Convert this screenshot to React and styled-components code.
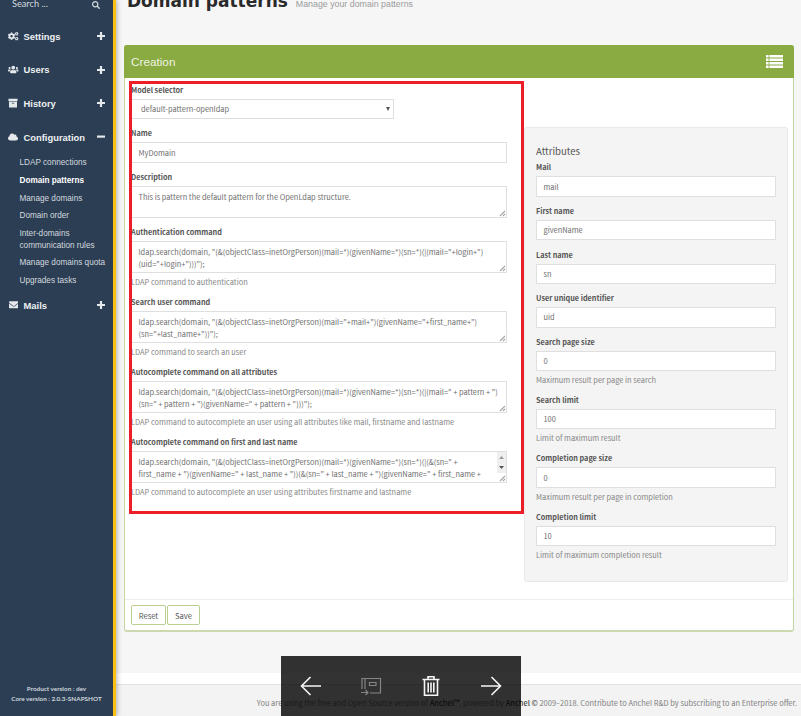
import React from 'react';
import styled, { createGlobalStyle, css } from 'styled-components';
import { FaCogs, FaUsers, FaCloud, FaEnvelope, FaSearch } from 'react-icons/fa';

const source = '"Noto Sans CJK SC", "Noto Sans", sans-serif';
const arial = '"Liberation Sans", Arial, sans-serif';

const GlobalStyle = createGlobalStyle`
  * { box-sizing: border-box; }
  body { margin: 0; overflow: hidden; background: #f6f6f6; }
`;

const Page = styled.div`
  position: relative;
  display: flex;
  width: 801px;
  height: 716px;
  overflow: hidden;
  font-family: ${source};
  font-size: 7.43px;
  color: #666;
`;

/* ---------- sidebar ---------- */

const Sidebar = styled.nav`
  flex: none;
  display: flex;
  flex-direction: column;
  width: 116px;
  background: #2b3e54;
  border-right: 3px solid #fbc012;
  box-shadow: 1px 0 5px rgba(0, 0, 0, 0.3);
  z-index: 1;
  color: #eef0f2;
  font-family: ${arial};
`;

const SearchRow = styled.div`
  display: flex;
  justify-content: space-between;
  align-items: center;
  height: 19px;
  margin: -6px 0 6px;
  padding: 0 13px 0 12px;
  font: 9.2px/19px Lato, sans-serif;
  color: #d5dade;
  svg { width: 8px; height: 8px; margin-top: 2px; }
`;

const MenuItem = styled.div`
  display: flex;
  align-items: center;
  height: 33.6px;
  padding: 1px 8px 0;
  font-size: 9.4px;
  font-weight: bold;
  span { flex: 1; margin-left: 5px; }
  svg { color: #e6e9ec; }
`;

const MenuIcon = styled.div`
  display: flex;
  justify-content: center;
  width: 10.5px;
  svg { width: ${p => p.$size || 10}px; height: ${p => p.$size || 10}px; }
`;

const Toggle = styled.div`
  display: flex;
  svg { width: 8px; height: 8px; }
`;

const SubMenu = styled.div`
  display: flex;
  flex-direction: column;
  gap: 5.6px;
  padding: 4px 0 1px 19.5px;
`;

const SubItem = styled.div`
  font-size: 8.2px;
  line-height: 12px;
  white-space: pre;
  color: ${p => (p.$active ? '#fff' : '#d3d9df')};
  font-weight: ${p => (p.$active ? 'bold' : 'normal')};
`;

const Versions = styled.div`
  margin-top: auto;
  padding-bottom: 12px;
  text-align: center;
  font: bold 6.35px/10px Lato, sans-serif;
  color: #cfd6dd;
`;

/* ---------- main column ---------- */

const Main = styled.main`
  flex: 1;
  min-width: 0;
  display: flex;
  flex-direction: column;
`;

const Heading = styled.header`
  display: flex;
  align-items: baseline;
  gap: 8px;
  height: 45px;
  padding-left: 11px;
  margin-top: -11px;
  h1 {
    margin: 0;
    font: bold 17px/24px "DejaVu Sans", sans-serif;
    color: #2a2a2a;
    white-space: nowrap;
  }
  span { font: 8.82px/12px ${arial}; color: #9b9b9b; }
`;

const Panel = styled.section`
  display: flex;
  flex-direction: column;
  width: 670px;
  height: 587px;
  margin: 11px 0 0 8px;
  background: #fff;
  border: 1px solid #c6d6a2;
  border-bottom: 2px solid #ccd9ae;
  border-radius: 3px;
`;

const PanelHeader = styled.div`
  display: flex;
  align-items: center;
  justify-content: space-between;
  height: 33px;
  margin: -1px -1px 0;
  padding: 0 11px 0 7px;
  border-radius: 3px 3px 0 0;
  background: #8aaa42;
  color: #eff4e2;
  font: 11.75px/31px ${arial};
`;

const PanelBody = styled.div`
  flex: 1;
  display: flex;
  align-items: flex-start;
  padding: 5px 5px 0 6px;
`;

const PanelFooter = styled.div`
  display: flex;
  gap: 1px;
  height: 31px;
  padding: 5px 0 0 6px;
  border-top: 1px solid #ededed;
`;

const Button = styled.button`
  width: ${p => p.$width}px;
  height: 20px;
  padding: 0;
  border: 1px solid #bccf92;
  border-radius: 2px;
  background: #fff;
  color: #555;
  font: 7.6px/17px ${source};
`;

const MainForm = styled.div`
  width: 393px;
`;

const Attributes = styled.div`
  width: 264px;
  height: 455px;
  margin-top: 44px;
  padding: 15px 11px 0;
  background: #f4f4f4;
  border: 1px solid #e9e9e9;
  border-radius: 3px;
`;

const AttributesTitle = styled.div`
  font-size: 9.6px;
  line-height: 16px;
  height: 17.4px;
  color: #555;
`;

const Group = styled.div`
  height: ${p => p.$height}px;
`;

const Label = styled.div`
  font-weight: bold;
  font-size: 7.28px;
  line-height: 15px;
  height: 16px;
  color: #555;
  white-space: nowrap;
`;

const box = css`
  background: #fff;
  border: 1px solid #dfdfdf;
  color: #6e6e6e;
`;

const Field = styled.div`
  ${box}
  display: flex;
  align-items: center;
  justify-content: space-between;
  width: ${p => p.$width}px;
  height: 20.4px;
  padding: 0 3px 0 ${p => p.$indent || 6.5}px;
  line-height: 18px;
`;

const Area = styled.div`
  ${box}
  position: relative;
  width: 376.3px;
  height: 32.4px;
  padding: 4px 6.500px 0;
  line-height: 12px;
  white-space: pre;
  overflow: hidden;
`;

const Help = styled.div`
  line-height: 18px;
  color: #858585;
  white-space: nowrap;
`;

const Grip = styled.svg`
  position: absolute;
  right: 0;
  bottom: 0;
  width: 7px;
  height: 7px;
`;

const ScrollTrack = styled.div`
  position: absolute;
  top: 0;
  right: 0;
  display: flex;
  flex-direction: column;
  align-items: center;
  justify-content: space-around;
  width: 9px;
  height: 21px;
  background: #efefef;
  svg { width: 5px; height: 3px; }
`;

const Highlight = styled.div`
  position: absolute;
  left: 129px;
  top: 81px;
  width: 394.5px;
  height: 433px;
  border: 3px solid #ec1f29;
  z-index: 2;
`;

/* ---------- bottom ---------- */

const Footer = styled.footer`
  margin-top: auto;
  height: 43px;
  padding-right: 4px;
  border-top: 11px solid #fff;
  background: #f3f3f3;
  text-align: right;
  font-size: 7.46px;
  line-height: 37px;
  color: #808080;
  white-space: nowrap;
  box-shadow: inset 0 1px #e2e2e2;
  b { font-weight: 500; color: #444; }
`;

const ViewerBar = styled.div`
  position: absolute;
  left: 281px;
  top: 656px;
  width: 240px;
  height: 60px;
  display: grid;
  grid-template-columns: repeat(4, 60px);
  place-items: center;
  background: rgba(0, 0, 0, 0.8);
  z-index: 3;
  svg { width: 22px; height: 22px; fill: none; stroke: #f5f5f5; stroke-width: 1.6; }
`;

const ArchiveBox = () => (
  <svg viewBox="0 0 10 10" fill="currentColor">
    <path d="M.5.8h9v2.400h-9zM1 3.800h8v5.700H1zM3.800 4.700v.8h2.400v-.8z" fillRule="evenodd" />
  </svg>
);

const menu = [
  { icon: FaCogs, label: 'Settings', size: 10.5 },
  { icon: FaUsers, label: 'Users', size: 11 },
  { icon: ArchiveBox, label: 'History' },
  { icon: FaCloud, label: 'Configuration', open: true },
];

const subMenu = [
  'LDAP connections', 'Domain patterns', 'Manage domains', 'Domain order',
  'Inter-domains\ncommunication rules', 'Manage domains quota', 'Upgrades tasks',
];

const commands = [
  {
    label: 'Authentication command',
    value: 'ldap.search(domain, "(&(objectClass=inetOrgPerson)(mail=*)(givenName=*)(sn=*)(|(mail="+login+")\n(uid="+login+")))");',
    help: 'LDAP command to authentication',
  },
  {
    label: 'Search user command',
    value: 'ldap.search(domain, "(&(objectClass=inetOrgPerson)(mail="+mail+")(givenName="+first_name+")\n(sn="+last_name+"))");',
    help: 'LDAP command to search an user',
  },
  {
    label: 'Autocomplete command on all attributes',
    value: 'ldap.search(domain, "(&(objectClass=inetOrgPerson)(mail=*)(givenName=*)(sn=*)(|(mail=" + pattern + ")\n(sn=" + pattern + ")(givenName=" + pattern + ")))");',
    help: 'LDAP command to autocomplete an user using all attributes like mail, firstname and lastname',
  },
  {
    label: 'Autocomplete command on first and last name',
    value: 'ldap.search(domain, "(&(objectClass=inetOrgPerson)(mail=*)(givenName=*)(sn=*)(|(&(sn=" +\nfirst_name + ")(givenName=" + last_name + "))(&(sn=" + last_name + ")(givenName=" + first_name +\n"))))");',
    help: 'LDAP command to autocomplete an user using attributes firstname and lastname',
    scroll: true,
  },
];

const attributes = [
  ['Mail', 'mail'],
  ['First name', 'givenName'],
  ['Last name', 'sn'],
  ['User unique identifier', 'uid'],
  ['Search page size', '0', 'Maximum result per page in search'],
  ['Search limit', '100', 'Limit of maximum result'],
  ['Completion page size', '0', 'Maximum result per page in completion'],
  ['Completion limit', '10', 'Limit of maximum completion result'],
];

const MenuEntry = ({ icon: Icon, label, size, open }) => (
  <MenuItem>
    <MenuIcon $size={size}><Icon /></MenuIcon>
    <span>{label}</span>
    <Toggle>
      <svg viewBox="0 0 8 8" fill="currentColor">
        <path d={open ? 'M0 2.500h8v2.200H0z' : 'M2.900 0h2.200v2.900H8v2.200H5.100V8H2.900V5.100H0V2.900h2.900z'} />
      </svg>
    </Toggle>
  </MenuItem>
);

const TextArea = ({ value, scroll }) => (
  <Area>
    {value}
    {scroll && (
      <ScrollTrack>
        <svg viewBox="0 0 5 3"><path d="M0 3 2.5 0 5 3Z" fill="#999" /></svg>
        <svg viewBox="0 0 5 3"><path d="M0 0 2.5 3 5 0Z" fill="#555" /></svg>
      </ScrollTrack>
    )}
    <Grip viewBox="0 0 7 7"><path d="M1 6 6 1M4 6 6 4" stroke="#a5a5a5" strokeWidth="1.1" /></Grip>
  </Area>
);

export default function App() {
  return (
    <Page>
      <GlobalStyle />
      <Sidebar>
        <SearchRow>Search ...<FaSearch /></SearchRow>
        {menu.map(m => <MenuEntry key={m.label} {...m} />)}
        <SubMenu>
          {subMenu.map(s => <SubItem key={s} $active={s === 'Domain patterns'}>{s}</SubItem>)}
        </SubMenu>
        <MenuEntry icon={FaEnvelope} label="Mails" size={9.5} />
        <Versions>Product version : dev<br />Core version : 2.0.3-SNAPSHOT</Versions>
      </Sidebar>
      <Main>
        <Heading>
          <h1>Domain patterns</h1>
          <span>Manage your domain patterns</span>
        </Heading>
        <Panel>
          <PanelHeader>
            Creation
            <svg width="17" height="13" viewBox="0 0 17 13" fill="#fff">
              <path d="M0 0h2.6v2.4H0zM3.4 0H17v2.4H3.4zM0 3.5h2.6v2.4H0zM3.4 3.5H17v2.4H3.4zM0 7h2.6v2.4H0zM3.4 7H17v2.4H3.4zM0 10.5h2.6v2.4H0zM3.4 10.5H17v2.4H3.4z" />
            </svg>
          </PanelHeader>
          <PanelBody>
            <MainForm>
              <Group $height={43.4}>
                <Label>Model selector</Label>
                <Field $width={263} $indent={9}>
                  default-pattern-openldap
                  <svg width="4" height="4" viewBox="0 0 4 4"><path d="M0 0h4L2 4z" fill="#555" /></svg>
                </Field>
              </Group>
              <Group $height={43.4}>
                <Label>Name</Label>
                <Field $width={376.3}>MyDomain</Field>
              </Group>
              <Group $height={55}>
                <Label>Description</Label>
                <TextArea value="This is pattern the default pattern for the OpenLdap structure." />
              </Group>
              {commands.map(c => (
                <Group key={c.label} $height={70}>
                  <Label>{c.label}</Label>
                  <TextArea value={c.value} scroll={c.scroll} />
                  <Help>{c.help}</Help>
                </Group>
              ))}
            </MainForm>
            <Attributes>
              <AttributesTitle>Attributes</AttributesTitle>
              {attributes.map(([label, value, help]) => (
                <Group key={label} $height={help ? 58.3 : 43.6}>
                  <Label>{label}</Label>
                  <Field $width={240}>{value}</Field>
                  {help && <Help>{help}</Help>}
                </Group>
              ))}
            </Attributes>
          </PanelBody>
          <PanelFooter>
            <Button $width={35}>Reset</Button>
            <Button $width={33}>Save</Button>
          </PanelFooter>
        </Panel>
        <Footer>
          You are using the free and Open Source version of <b>Anchel™</b>, powered by <b>Anchel ©</b> 2009–2018. Contribute to Anchel R&amp;D by subscribing to an Enterprise offer.
        </Footer>
      </Main>
      <Highlight />
      <ViewerBar>
        <svg viewBox="0 0 22 22"><path d="M21 11H1M10.500 2 1.500 11l9 9" /></svg>
        <svg viewBox="0 0 22 22"><g stroke="#858585" strokeWidth="1.200"><path d="M2 14V3.500h18.500v14.500H10M5 4v10M9.500 7.500h6.500v3H9.500zM1 17.500h7M5.500 15l2.500 2.500-2.500 2.500" /></g></svg>
        <svg viewBox="0 0 22 22"><path d="M2.500 4.500h17M8 4V1.800h6V4M4.500 5v15.200h13V5M8.200 7.500v10M11 7.500v10M13.800 7.500v10" /></svg>
        <svg viewBox="0 0 22 22"><path d="M1 11h20M11.500 2l9 9-9 9" /></svg>
      </ViewerBar>
    </Page>
  );
}
